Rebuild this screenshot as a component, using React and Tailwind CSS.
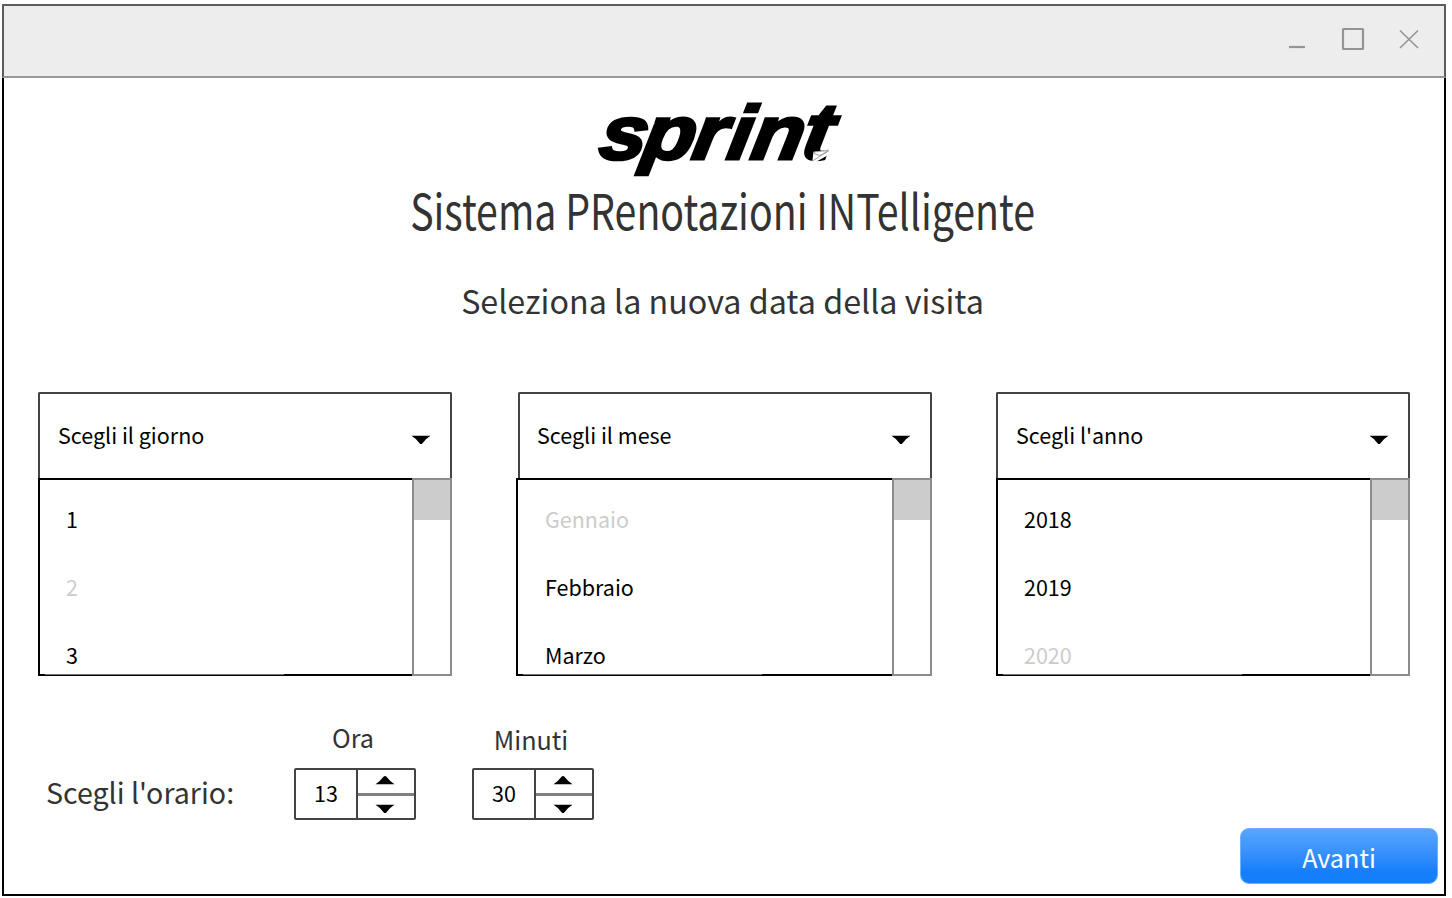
const columns = [
  {
    label: "Scegli il giorno",
    box: "ml-0 pl-[18px]",
    list: "ml-0 w-[414px]",
    item: "pl-[26px]",
    options: [["1", true], ["2", false], ["3", true]],
  },
  {
    label: "Scegli il mese",
    box: "ml-[2px] pl-[17px]",
    list: "ml-0 w-[416px]",
    item: "pl-[27px]",
    options: [["Gennaio", false], ["Febbraio", true], ["Marzo", true]],
  },
  {
    label: "Scegli l'anno",
    box: "ml-0 pl-[18px]",
    list: "ml-0 w-[414px]",
    item: "pl-[26px]",
    options: [["2018", true], ["2019", true], ["2020", false]],
  },
];

function Caret({ up = false, className = "" }) {
  return (
    <svg width="20" height="10" viewBox="0 0 20 10" className={`block shrink-0 ${className}`}>
      <path
        d={up ? "M0.5 9.2Q5 6.5 8.5 1.8Q10 0 11.5 1.8Q15 6.5 19.5 9.2Z" : "M0.5 0.8Q5 3.5 8.5 8.2Q10 10 11.5 8.2Q15 3.5 19.5 0.8Z"}
        fill="#000"
      />
    </svg>
  );
}

function TitleBar() {
  return (
    <div className="flex h-[74px] shrink-0 items-center justify-end border-2 border-[#5c5c5c] border-b-[#999] bg-[#ededed]">
      <svg width="160" height="40" viewBox="1284 21 160 40" fill="none" stroke="#949494" className="block">
        <path d="M1289 47H1305" strokeWidth="2.2" />
        <rect x="1343" y="29" width="20" height="20" rx="0.5" strokeWidth="2.2" />
        <path d="M1400 30.5L1418 48M1418 30.5L1400 48" strokeWidth="1.6" />
      </svg>
    </div>
  );
}

function Logo() {
  return (
    <svg width="260" height="79" viewBox="592 100 260 79" className="block shrink-0 overflow-visible">
      <g transform="translate(597 159) skewX(-10) scale(1.06 0.95)" fontFamily="Liberation Sans, sans-serif" fontWeight="700" fontStyle="italic" fill="#000" stroke="#000" strokeWidth="3.2">
        <text x="0 41 88 121 143.5 191" y="0" fontSize="80">
          sprin<tspan fontSize="84">t</tspan>
        </text>
      </g>
      <path d="M813.5 152L832 149L832 153L812 164Z" fill="#fff" />
      <path d="M813.8 152L828.5 150.5L820 155.5L815 154ZM828.5 151L812.5 161" fill="none" stroke="#999" strokeWidth="0.9" />
    </svg>
  );
}

function Select({ label, box, list, item, options }) {
  return (
    <div className="flex flex-col">
      <div className={`flex h-[86px] w-[414px] items-center justify-between rounded-t-[2px] border-2 border-b-0 border-[#444] pr-[19px] ${box}`}>
        <span className="-mt-[2px] text-[21.5px] leading-[32px]">{label}</span>
        <Caret className="mt-[7px]" />
      </div>
      <div className={`relative flex h-[198px] ${list}`}>
        <div className="flex flex-1 flex-col overflow-hidden border-2 border-r-0 border-black pt-[4.5px]">
          {options.map(([text, enabled]) => (
            <div key={text} className={`flex h-[68px] shrink-0 items-center text-[21.5px] leading-[32px] ${item} ${enabled ? "text-black" : "text-[#ccc]"}`}>
              {text}
            </div>
          ))}
        </div>
        <div className="w-[40px] border-2 border-[#8c8c8c]">
          <div className="h-[39.5px] bg-[#ccc]" />
        </div>
        <div className="absolute bottom-[1px] left-[7px] h-[1px] w-[239px] bg-[#777]" />
      </div>
    </div>
  );
}

function Spinner({ label, value, shift }) {
  return (
    <div className="flex w-[122px] flex-col">
      <div className={`h-[49px] text-center text-[25.2px] leading-[36px] text-[#333] ${shift}`}>{label}</div>
      <div className="flex h-[52px] rounded-[2px] border-2 border-[#444]">
        <div className="flex w-[62px] items-center justify-center border-r-2 border-[#444] pb-[2px] text-[21.5px] leading-[32px]">{value}</div>
        <div className="flex flex-1 flex-col">
          <div className="flex h-[23px] justify-center pr-[2px] pt-[5px]">
            <Caret up />
          </div>
          <div className="h-[3px] bg-[#808080]" />
          <div className="flex flex-1 justify-center pr-[2px] pt-[8px]">
            <Caret />
          </div>
        </div>
      </div>
    </div>
  );
}

export default function App() {
  return (
    <div className="flex h-[898px] w-[1452px] flex-col overflow-hidden bg-white pb-[2px] pl-[2px] pr-[6px] pt-[4px] font-['Noto_Sans_CJK_SC',sans-serif] text-black">
      <TitleBar />
      <main className="flex flex-1 flex-col border-2 border-t-0 border-black pt-[22px]">
        <div className="flex justify-center pr-[4px]">
          <Logo />
        </div>
        <h1 className="flex justify-center pr-[2px] text-[49px] leading-[60px] text-[#333]">
          <span className="scale-x-[0.802] whitespace-nowrap">Sistema PRenotazioni INTelligente</span>
        </h1>
        <h2 className="mt-[37px] pr-[3px] text-center text-[32.25px] leading-[48px] text-[#333]">Seleziona la nuova data della visita</h2>
        <div className="mt-[68px] flex justify-between pl-[34px] pr-[34px]">
          {columns.map((c) => (
            <Select key={c.label} {...c} />
          ))}
        </div>
        <div className="mt-[43px] flex pl-[42px]">
          <div className="w-[248px] pt-[52px] text-[28.6px] leading-[42px] text-[#333]">Scegli l'orario:</div>
          <Spinner label="Ora" value="13" shift="pr-[4px]" />
          <div className="w-[56px]" />
          <Spinner label="Minuti" value="30" shift="pr-[4px] pt-[2px]" />
        </div>
        <button className="mr-[6px] mt-[8px] flex h-[56px] w-[198px] items-center justify-center self-end rounded-[9px] border border-[#6fb0fb] bg-linear-to-b from-[#57a6fc] to-[#147efb] to-80% pt-[2px] text-[25.2px] leading-[38px] text-white">
          Avanti
        </button>
      </main>
    </div>
  );
}
